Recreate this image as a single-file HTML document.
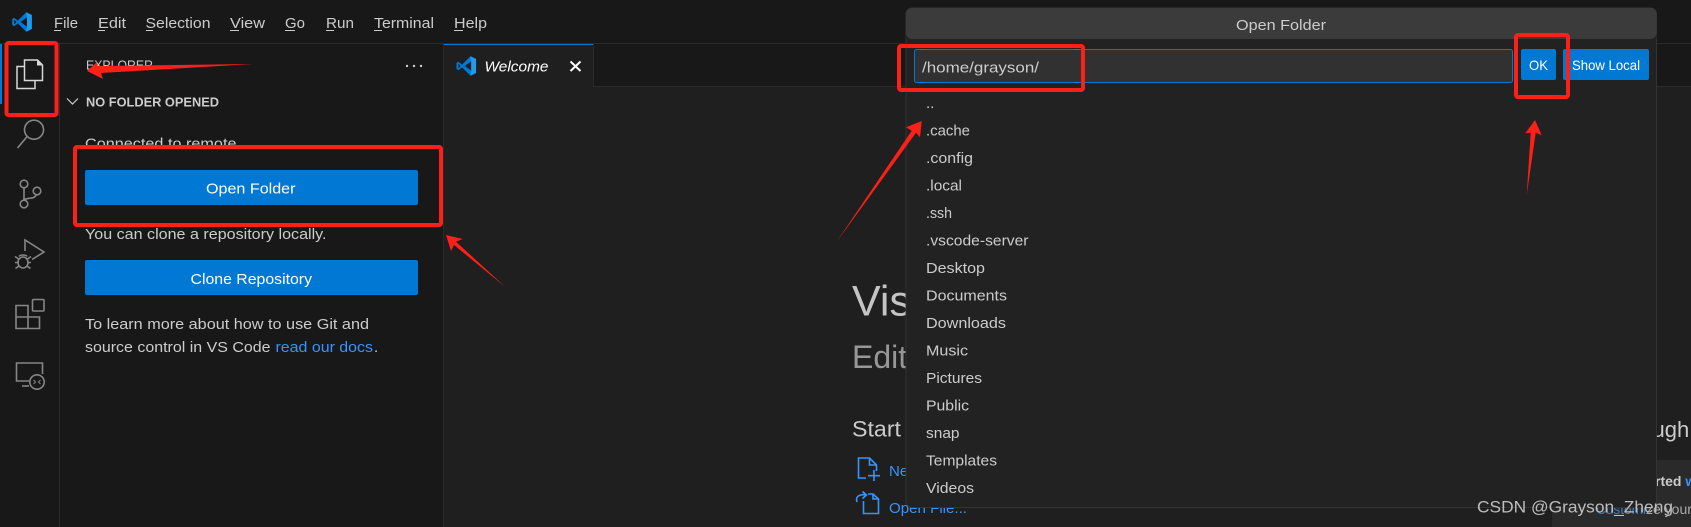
<!DOCTYPE html>
<html lang="en">
<head>
<meta charset="utf-8">
<title>VS Code Open Folder</title>
<style>
html,body{margin:0;padding:0;background:#181818;width:1691px;height:527px;overflow:hidden}
svg{display:block}
text{font-family:"Liberation Sans",sans-serif;font-size:15px;fill:#cccccc}
.m{fill:#cfcfcf}
.ic{fill:none;stroke:#868686;stroke-width:1.6}
.bl{fill:none;stroke:#3794ff;stroke-width:1.6}
.fi{fill:none;stroke:#d7d7d7;stroke-width:1.5}
.r{fill:none;stroke:#fb2018;stroke-width:4}
.a{fill:#fb2018}
</style>
</head>
<body>
<svg width="1691" height="527" viewBox="0 0 1691 527" xmlns="http://www.w3.org/2000/svg">
<defs>
<symbol id="vs" viewBox="0 0 100 100">
<path fill="#0078d4" fill-rule="evenodd" d="M71 1L99 15V85L71 99L29 57L11 71L1 65V35L11 29L29 43ZM75 27L43 50L75 73ZM11 38V62L22 50Z"/>
<path fill="#1f9cf0" d="M71 1L99 15V85L71 99L75 73V27Z"/>
</symbol>
</defs>

<rect width="1691" height="527" fill="#181818"/>

<!-- borders -->
<rect x="0" y="43" width="1691" height="1" fill="#2b2b2b"/>
<rect x="59" y="44" width="1" height="483" fill="#2b2b2b"/>
<rect x="443" y="44" width="1" height="483" fill="#2b2b2b"/>

<!-- editor -->
<rect x="444" y="87" width="1247" height="440" fill="#1f1f1f"/>
<rect x="444" y="86" width="1247" height="1" fill="#2b2b2b"/>
<rect x="444" y="44" width="149" height="43" fill="#1f1f1f"/>
<rect x="444" y="44" width="149" height="1" fill="#0078d4"/>
<rect x="593" y="44" width="1" height="43" fill="#2b2b2b"/>

<!-- title bar -->
<use href="#vs" x="12" y="12" width="20" height="20"/>
<g class="m">
<text x="54" y="28" textLength="24" lengthAdjust="spacingAndGlyphs">File</text>
<text x="98" y="28" textLength="28" lengthAdjust="spacingAndGlyphs">Edit</text>
<text x="145.5" y="28" textLength="65" lengthAdjust="spacingAndGlyphs">Selection</text>
<text x="230" y="28" textLength="35" lengthAdjust="spacingAndGlyphs">View</text>
<text x="285" y="28" textLength="20" lengthAdjust="spacingAndGlyphs">Go</text>
<text x="326" y="28" textLength="28" lengthAdjust="spacingAndGlyphs">Run</text>
<text x="374" y="28" textLength="60" lengthAdjust="spacingAndGlyphs">Terminal</text>
<text x="454" y="28" textLength="33" lengthAdjust="spacingAndGlyphs">Help</text>
</g>
<g fill="#cccccc">
<rect x="54" y="30" width="7" height="1"/>
<rect x="98" y="30" width="7" height="1"/>
<rect x="146" y="30" width="7" height="1"/>
<rect x="230" y="30" width="9" height="1"/>
<rect x="285" y="30" width="10" height="1"/>
<rect x="326" y="30" width="8" height="1"/>
<rect x="374" y="30" width="8" height="1"/>
<rect x="454" y="30" width="9" height="1"/>
</g>

<!-- activity bar -->
<rect x="0" y="44" width="2" height="60" fill="#0078d4"/>
<path class="fi" d="M24.5 60H37.5L42.5 65V80.5H24.5Z"/>
<path d="M37 60V65.5H42.5Z" fill="#d7d7d7"/>
<path class="fi" d="M24.5 66.5H17V88.5H35V80.5"/>
<circle class="ic" cx="34" cy="129.7" r="9.5"/>
<path class="ic" d="M27 136.7L17.5 148"/>
<circle class="ic" cx="24" cy="184" r="3.8"/>
<circle class="ic" cx="37" cy="191" r="3.8"/>
<circle class="ic" cx="24" cy="204" r="3.8"/>
<path class="ic" d="M24 188V200M36 195C35 198 32 198 28 198.5C26 199 24.5 199 24 200"/>
<path class="ic" d="M25 251V240L44 252L32 259.5"/>
<ellipse class="ic" cx="23" cy="262.5" rx="5" ry="5.5"/>
<path class="ic" d="M15 256.5L18.5 259M31 256.5L27.5 259M15 262.5H18M31 262.5H28M15.5 268.5L19 266M30.5 268.5L27 266M19 256.5C20 254.5 26 254.5 27 256.5"/>
<path class="ic" d="M16 305.5H28V328.5H16ZM16 317H39.5V328.5H28"/>
<rect class="ic" x="32.5" y="299.5" width="11.5" height="11.5" rx="1"/>
<path class="ic" d="M29 381H16.5V363H42.5V374"/>
<path class="ic" d="M22 386H29"/>
<circle class="ic" cx="37" cy="382" r="7.2"/>
<path d="M33.5 384L35.5 382L33.5 380M40.5 380L38.5 382L40.5 384" fill="none" stroke="#868686" stroke-width="1"/>

<!-- sidebar -->
<text x="86" y="69.5" style="font-size:12.5px" textLength="67" lengthAdjust="spacingAndGlyphs">EXPLORER</text>
<circle cx="407" cy="66" r="1.2" fill="#ccc"/><circle cx="414" cy="66" r="1.2" fill="#ccc"/><circle cx="421" cy="66" r="1.2" fill="#ccc"/>
<path d="M67 98.5L72.5 104L78 98.5" fill="none" stroke="#cccccc" stroke-width="1.2"/>
<text x="86" y="106.5" style="font-size:12.5px;font-weight:bold" textLength="133" lengthAdjust="spacingAndGlyphs">NO FOLDER OPENED</text>
<text x="85" y="148.5" textLength="156" lengthAdjust="spacingAndGlyphs">Connected to remote.</text>
<rect x="85" y="170" width="333" height="35" rx="2" fill="#0078d4"/>
<text x="206" y="193.5" style="fill:#fff" textLength="89.5" lengthAdjust="spacingAndGlyphs">Open Folder</text>
<text x="85" y="239" textLength="241.5" lengthAdjust="spacingAndGlyphs">You can clone a repository locally.</text>
<rect x="85" y="260" width="333" height="35" rx="2" fill="#0078d4"/>
<text x="190.5" y="284" style="fill:#fff" textLength="121.5" lengthAdjust="spacingAndGlyphs">Clone Repository</text>
<text x="85" y="329" textLength="284" lengthAdjust="spacingAndGlyphs">To learn more about how to use Git and</text>
<text x="85" y="352" textLength="185.5" lengthAdjust="spacingAndGlyphs">source control in VS Code</text>
<text x="275.5" y="352" style="fill:#3794ff" textLength="97.5" lengthAdjust="spacingAndGlyphs">read our docs</text>
<text x="374" y="352">.</text>

<!-- tab -->
<use href="#vs" x="456" y="56" width="20.5" height="20"/>
<text x="484.5" y="71.5" style="font-style:italic;fill:#fff" textLength="64" lengthAdjust="spacingAndGlyphs">Welcome</text>
<path d="M570.5 61.5L580.5 71M580.5 61.5L570.5 71" fill="none" stroke="#fff" stroke-width="2"/>

<!-- welcome page behind dialog -->
<text x="852" y="315.5" style="font-size:43px;fill:#c4c4c4">Vis</text>
<text x="852" y="368" style="font-size:32px;fill:#979797">Edit</text>
<text x="852" y="436.5" style="font-size:22px" textLength="49" lengthAdjust="spacingAndGlyphs">Start</text>
<path class="bl" d="M866 478H858.5V458H869.5L876.5 465V471M869.5 458V465H876.5"/>
<path class="bl" d="M868 475.7H880M874 470V481"/>
<text x="889" y="476" style="fill:#3794ff">New</text>
<path class="bl" d="M868 494H873L878.5 499V513.5H863.5V501M873 494V499H878.5"/>
<path class="bl" d="M857 502C855 496 860 494 866 495M862.5 491.5L866.5 495L862.5 498.5"/>
<text x="889" y="513" style="fill:#3794ff" textLength="78" lengthAdjust="spacingAndGlyphs">Open File...</text>
<text x="1652.5" y="437" style="font-size:22px">ugh</text>
<rect x="1552" y="460" width="139" height="67" fill="#2a2a2a"/>
<text x="1655" y="486" style="font-size:14px;font-weight:bold">rted <tspan style="fill:#3794ff">w</tspan></text>
<text x="1596" y="514" style="font-size:14px;fill:#3a7ec4" textLength="50" lengthAdjust="spacingAndGlyphs">Customi</text>
<text x="1646" y="514" style="font-size:14px;fill:#aaa">ze your</text>

<!-- dialog -->
<rect x="906" y="8" width="750.5" height="499.5" rx="6" fill="#222222" stroke="#333333" stroke-width="1"/>
<path d="M906 39V14a6 6 0 0 1 6-6H1650.5a6 6 0 0 1 6 6V39Z" fill="#3b3b3b"/>
<path d="M906 33a6 6 0 0 0 6 6H1650.5a6 6 0 0 0 6-6V39H906Z" fill="#222"/>
<text x="1236" y="30" textLength="90" lengthAdjust="spacingAndGlyphs">Open Folder</text>
<rect x="914.5" y="49.5" width="598" height="33" rx="2" fill="#313131" stroke="#0078d4"/>
<text x="922" y="72.5" textLength="117" lengthAdjust="spacingAndGlyphs">/home/grayson/</text>
<rect x="1521" y="49" width="35" height="31" rx="2" fill="#0078d4"/>
<text x="1529" y="70" style="font-size:14px;fill:#fff" textLength="19" lengthAdjust="spacingAndGlyphs">OK</text>
<rect x="1563" y="49" width="86" height="31" rx="2" fill="#0078d4"/>
<text x="1572" y="70" style="font-size:14px;fill:#fff" textLength="68" lengthAdjust="spacingAndGlyphs">Show Local</text>

<text x="926" y="108">..</text>
<text x="926" y="135.7" textLength="44" lengthAdjust="spacingAndGlyphs">.cache</text>
<text x="926" y="163" textLength="47" lengthAdjust="spacingAndGlyphs">.config</text>
<text x="926" y="190.7" textLength="36" lengthAdjust="spacingAndGlyphs">.local</text>
<text x="926" y="218" textLength="26" lengthAdjust="spacingAndGlyphs">.ssh</text>
<text x="926" y="245.7" textLength="102.5" lengthAdjust="spacingAndGlyphs">.vscode-server</text>
<text x="926" y="273" textLength="59" lengthAdjust="spacingAndGlyphs">Desktop</text>
<text x="926" y="300.7" textLength="81" lengthAdjust="spacingAndGlyphs">Documents</text>
<text x="926" y="328" textLength="80" lengthAdjust="spacingAndGlyphs">Downloads</text>
<text x="926" y="355.7" textLength="42" lengthAdjust="spacingAndGlyphs">Music</text>
<text x="926" y="383" textLength="56" lengthAdjust="spacingAndGlyphs">Pictures</text>
<text x="926" y="410.7" textLength="43" lengthAdjust="spacingAndGlyphs">Public</text>
<text x="926" y="438" textLength="33.5" lengthAdjust="spacingAndGlyphs">snap</text>
<text x="926" y="465.7" textLength="71" lengthAdjust="spacingAndGlyphs">Templates</text>
<text x="926" y="493" textLength="48" lengthAdjust="spacingAndGlyphs">Videos</text>

<!-- watermark -->
<text x="1477" y="512.5" style="font-size:17px;fill:#bdbdbd" textLength="196" lengthAdjust="spacingAndGlyphs">CSDN @Grayson_Zheng</text>

<!-- annotations -->
<rect class="r" x="6.5" y="43" width="50" height="72" rx="2"/>
<rect class="r" x="75" y="147" width="366" height="78" rx="2"/>
<rect class="r" x="899" y="46" width="184" height="44" rx="2"/>
<rect class="r" x="1516" y="35" width="52" height="62" rx="2"/>
<path class="a" d="M87 71L97 62L97 66L253 64L101 73L103 79Z"/>
<path class="a" d="M446 235L462.7 239L456 241.7L505 286.7L454 245L451 251Z"/>
<path class="a" d="M921.7 121L906 127.3L911.7 130.7L836 242.7L916 132.7L920 137.3Z"/>
<path class="a" d="M1535 120L1525.3 133.3L1530.7 132.7L1526.7 195L1535.7 132.7L1541.7 135.3Z"/>
</svg>
</body>
</html>
